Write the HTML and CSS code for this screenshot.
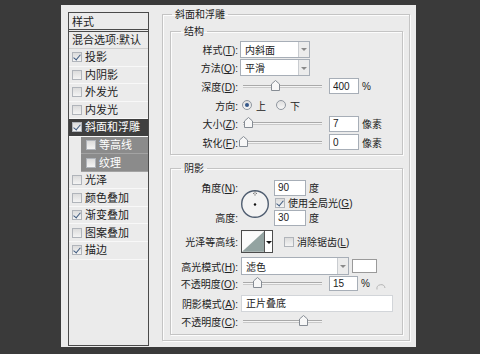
FILE: index.html
```html
<!DOCTYPE html>
<html lang="zh-CN">
<head>
    <meta charset="UTF-8">
    <title>图层样式 - 斜面和浮雕</title>
    <link rel="stylesheet" href="styles.css">
</head>
<body>

    <div class="dialog">

        <!-- Lista de estilos -->
        <ul class="style-list">
            <li class="list-head">样式</li>
            <li class="list-blend">混合选项:默认</li>
            <li class="item"><span class="check on"></span>投影</li>
            <li class="item"><span class="check"></span>内阴影</li>
            <li class="item"><span class="check"></span>外发光</li>
            <li class="item"><span class="check"></span>内发光</li>
            <li class="item selected"><span class="check on"></span>斜面和浮雕</li>
            <li class="item sub"><span class="check"></span>等高线</li>
            <li class="item sub"><span class="check"></span>纹理</li>
            <li class="item"><span class="check"></span>光泽</li>
            <li class="item"><span class="check"></span>颜色叠加</li>
            <li class="item"><span class="check on"></span>渐变叠加</li>
            <li class="item"><span class="check"></span>图案叠加</li>
            <li class="item"><span class="check on"></span>描边</li>
        </ul>

        <fieldset class="group outer">
            <legend>斜面和浮雕</legend>

            <!-- 结构 -->
            <fieldset class="group structure">
                <legend>结构</legend>
                <div class="rows">
                    <div class="row">
                        <span class="lbl">样式(<u>T</u>):</span>
                        <div class="select sel-short"><span>内斜面</span><i class="arrow"></i></div>
                    </div>
                    <div class="row">
                        <span class="lbl">方法(<u>Q</u>):</span>
                        <div class="select sel-short"><span>平滑</span><i class="arrow"></i></div>
                    </div>
                    <div class="row">
                        <span class="lbl">深度(<u>D</u>):</span>
                        <div class="slider"><i class="thumb" style="left: 28px"></i></div>
                        <input class="num" type="text" value="400">
                        <span class="unit">%</span>
                    </div>
                    <div class="row">
                        <span class="lbl">方向:</span>
                        <span class="radio on"></span><span class="radio-text">上</span>
                        <span class="radio"></span><span class="radio-text">下</span>
                    </div>
                    <div class="row">
                        <span class="lbl">大小(<u>Z</u>):</span>
                        <div class="slider"><i class="thumb" style="left: 1px"></i></div>
                        <input class="num" type="text" value="7">
                        <span class="unit">像素</span>
                    </div>
                    <div class="row">
                        <span class="lbl">软化(<u>F</u>):</span>
                        <div class="slider"><i class="thumb" style="left: -4px"></i></div>
                        <input class="num" type="text" value="0">
                        <span class="unit">像素</span>
                    </div>
                </div>
            </fieldset>

            <!-- 阴影 -->
            <fieldset class="group shading">
                <legend>阴影</legend>

                <div class="angle-block">
                    <span class="lbl a-lbl1">角度(<u>N</u>):</span>
                    <svg class="dial" width="30" height="30" viewBox="0 0 30 30">
                        <circle cx="15" cy="15" r="13.3" fill="#f3f3f3" stroke="#4f5d70" stroke-width="1.4"/>
                        <circle cx="15" cy="15.5" r="1.2" fill="#111"/>
                        <path d="M15 2.5v1.2M15 5.3v1.2M13.2 4.4h1.1M15.8 4.4h1.1" stroke="#333" stroke-width="0.8"/>
                    </svg>
                    <div class="a-r1"><input class="num angle" type="text" value="90"><span class="unit">度</span></div>
                    <div class="a-r2"><span class="check on"></span><span class="check-text">使用全局光(<u>G</u>)</span></div>
                    <span class="lbl a-lbl3">高度:</span>
                    <div class="a-r3"><input class="num angle" type="text" value="30"><span class="unit">度</span></div>
                </div>

                <div class="row contour-row">
                    <span class="lbl">光泽等高线:</span>
                    <div class="contour">
                        <svg width="23" height="21" viewBox="0 0 23 21">
                            <rect width="23" height="21" fill="#fbfbfb"/>
                            <polygon points="0,21 23,0 23,21" fill="#93a3a1"/>
                        </svg>
                        <i class="arrow dark"></i>
                    </div>
                    <span class="check antialias"></span><span class="check-text">消除锯齿(<u>L</u>)</span>
                </div>

                <div class="row mode-row">
                    <span class="lbl">高光模式(<u>H</u>):</span>
                    <div class="select sel-mode"><span>滤色</span><i class="arrow"></i></div>
                    <span class="swatch"></span>
                </div>

                <div class="row opacity-row">
                    <span class="lbl">不透明度(<u>O</u>):</span>
                    <div class="slider"><i class="thumb" style="left: 10px"></i></div>
                    <input class="num small" type="text" value="15">
                    <span class="unit">%</span>
                    <svg class="reset" width="10" height="7" viewBox="0 0 10 7">
                        <path d="M1 6.5 A4 4 0 0 1 9 5" fill="none" stroke="#b5b5b5" stroke-width="1"/>
                    </svg>
                </div>

                <div class="row shadow-row">
                    <span class="lbl">阴影模式(<u>A</u>):</span>
                    <div class="field-wide">正片叠底</div>
                </div>

                <div class="row opacity-row2">
                    <span class="lbl">不透明度(<u>C</u>):</span>
                    <div class="slider"><i class="thumb" style="left: 56px"></i></div>
                </div>
            </fieldset>
        </fieldset>

    </div>

</body>
</html>
```

FILE: styles.css
```css
* {
    box-sizing: border-box;
}

body {
    margin: 0;
    background-color: #3a3a3a;
    font-family: 'Liberation Sans', 'Noto Sans CJK SC', sans-serif;
    font-size: 11px;
    color: #222;
    width: 480px;
    height: 354px;
    overflow: hidden;
}

u {
    text-decoration-thickness: 1px;
    text-underline-offset: 1px;
}

.dialog {
    width: 355px;
    height: 342px;
    margin: 5px 0 0 61px;
    padding: 0 6px 0 7px;
    background-color: #ebebeb;
    display: flex;
    align-items: flex-start;
    gap: 13px;
}

/* Lista de estilos */
.style-list {
    list-style: none;
    margin: 7px 0 0;
    padding: 0;
    width: 81px;
    height: 334px;
    border: 1px solid #4a4a4a;
    background-color: #ebebeb;
    line-height: 16px;
}

.list-head {
    height: 19px;
    padding: 1px 0 0 3px;
    border-bottom: 3px double #4a4a4a;
}

.list-blend {
    height: 17px;
    padding: 0 0 0 3px;
    border-bottom: 1px solid #cfcfcf;
    line-height: 17px;
}

.item {
    height: 17.55px;
    padding-left: 3px;
    display: flex;
    align-items: center;
    border-bottom: 1px solid #f8f8f8;
}

.item.selected {
    background-color: #3f3f3f;
    color: #fff;
}

.item.sub {
    margin-left: 12px;
    padding-left: 5px;
    background-color: #8b8b8b;
    color: #fff;
    border-bottom-color: #a3a3a3;
}

.check {
    position: relative;
    display: inline-block;
    flex: none;
    width: 10px;
    height: 10px;
    margin-right: 3px;
    border: 1px solid #b0b4ba;
    background: linear-gradient(#dcdcdc, #f4f4f4);
}

.check.on::after {
    content: '';
    position: absolute;
    left: 2px;
    top: 0px;
    width: 3px;
    height: 6px;
    border-right: 1.5px solid #3f5b80;
    border-bottom: 1.5px solid #3f5b80;
    transform: rotate(40deg);
}

/* Grupos */
.group {
    margin: 0;
    padding: 0;
    min-width: 0;
    border: 1px solid #c4c4c4;
    box-shadow: inset 1px 1px 0 #fcfcfc, 1px 1px 0 #fcfcfc;
}

.group legend {
    padding: 0 3px;
    line-height: 13px;
}

.outer {
    width: 248px;
    height: 333px;
    margin-top: 3px;
    padding: 0 6px 0 7px;
    font-size: 10px;
}

.outer > legend {
    margin-left: 2px;
}

.structure {
    height: 130px;
    margin-top: 4px;
}

.shading {
    height: 173px;
    margin-top: 7px;
}

.structure > legend,
.shading > legend {
    margin-left: 10px;
}

.rows {
    padding-top: 2px;
}

.row {
    display: flex;
    align-items: center;
    height: 18.6px;
}

.lbl {
    flex: none;
    width: 67px;
    text-align: right;
    white-space: nowrap;
}

.select {
    display: flex;
    align-items: center;
    justify-content: space-between;
    height: 17px;
    margin-left: 2px;
    background-color: #fff;
    border: 1px solid #a7aeb7;
    padding-left: 4px;
}

.sel-short {
    width: 70px;
}

.sel-mode {
    width: 108px;
    height: 18px;
    margin-left: 3px;
}

.arrow {
    position: relative;
    width: 11px;
    height: 100%;
    background-color: #ececec;
    border-left: 1px solid #c9ccd0;
}

.arrow::after {
    content: '';
    position: absolute;
    left: 2px;
    top: 50%;
    margin-top: -1px;
    border-left: 3px solid transparent;
    border-right: 3px solid transparent;
    border-top: 3px solid #8a8a8a;
}

.arrow.dark {
    background-color: #fff;
    border-left: 1px solid #555;
    width: 8px;
}

.arrow.dark::after {
    left: 1px;
    border-top-color: #111;
}

.slider {
    position: relative;
    width: 79px;
    height: 3px;
    margin-left: 5px;
    background-color: #f4f4f4;
    border-top: 1px solid #a9a9a9;
    border-bottom: 1px solid #c9c9c9;
}

.thumb {
    position: absolute;
    top: -6px;
    width: 9px;
    height: 11px;
    background: url("data:image/svg+xml,%3Csvg xmlns='http://www.w3.org/2000/svg' width='9' height='11'%3E%3Cpolygon points='0.5,4 4.5,0.5 8.5,4 8.5,10.5 0.5,10.5' fill='%23f7f7f7' stroke='%23868c94'/%3E%3C/svg%3E");
}

.num {
    width: 30px;
    height: 16px;
    margin: 0 0 0 7px;
    padding: 0 0 0 3px;
    border: 1px solid #a7aeb7;
    background-color: #fff;
    font-family: 'Liberation Sans', sans-serif;
    font-size: 10px;
    color: #222;
}

.num.small {
    width: 29px;
    height: 15px;
}

.unit {
    margin-left: 3px;
}

.radio {
    position: relative;
    flex: none;
    width: 10px;
    height: 10px;
    margin-left: 4px;
    border: 1px solid #8f969f;
    border-radius: 50%;
    background: linear-gradient(#dedede, #f7f7f7);
}

.radio + .radio-text {
    margin-left: 4px;
}

.radio-text + .radio {
    margin-left: 10px;
}

.radio.on::after {
    content: '';
    position: absolute;
    left: 2px;
    top: 2px;
    width: 4px;
    height: 4px;
    border-radius: 50%;
    background-color: #34578a;
}

/* Bloco do angulo */
.angle-block {
    display: grid;
    grid-template-columns: 67px 36px auto;
    grid-template-rows: 17px 13px 17px;
    margin-top: 4px;
    align-items: center;
}

.a-lbl1 { grid-area: 1 / 1; }
.a-lbl3 { grid-area: 3 / 1; }
.dial { grid-area: 1 / 2 / 4 / 3; margin: 2px 0 0 2px; }
.a-r1 { grid-area: 1 / 3; display: flex; align-items: center; }
.a-r2 { grid-area: 2 / 3; display: flex; align-items: center; padding-left: 1px; }
.a-r3 { grid-area: 3 / 3; display: flex; align-items: center; }

.num.angle {
    width: 32px;
    margin-left: 0;
}

.check-text {
    white-space: nowrap;
}

.contour-row {
    height: 23px;
    margin-top: 4px;
}

.contour {
    display: flex;
    width: 32px;
    height: 23px;
    margin-left: 3px;
    border: 1px solid #4c4c4c;
}

.check.antialias {
    margin-left: 11px;
}

.mode-row {
    height: 18px;
    margin-top: 4px;
}

.swatch {
    width: 25px;
    height: 14px;
    margin-left: 3px;
    background-color: #fff;
    border: 1px solid #9a9a9a;
}

.opacity-row {
    height: 17px;
}

.reset {
    margin: 5px 0 0 6px;
}

.shadow-row {
    height: 18px;
    margin-top: 2px;
}

.field-wide {
    width: 152px;
    height: 17px;
    margin-left: 3px;
    padding-left: 4px;
    line-height: 15px;
    background-color: #fff;
    border: 1px solid #d2d5d9;
}

.opacity-row2 {
    height: 18px;
}
```
